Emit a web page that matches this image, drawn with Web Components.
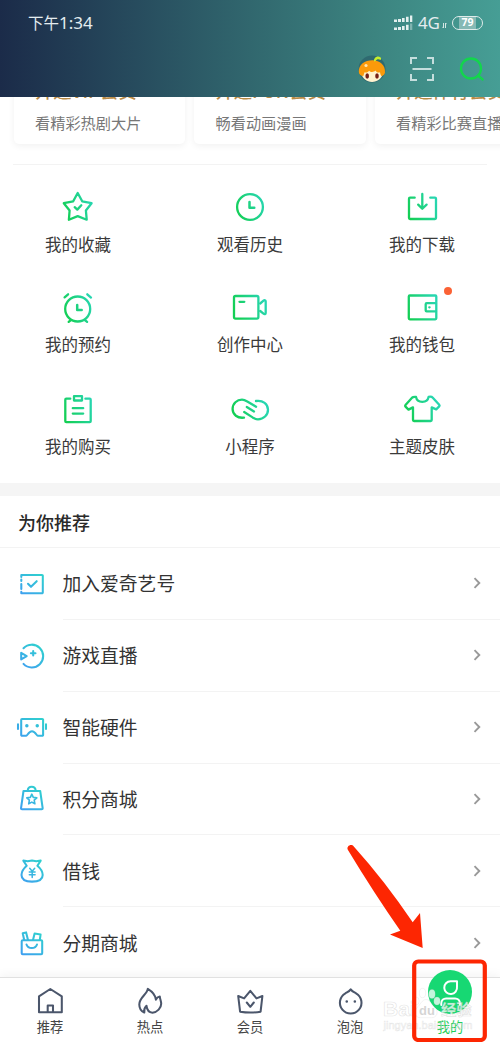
<!DOCTYPE html>
<html lang="zh-CN">
<head>
<meta charset="utf-8">
<title>我的</title>
<style>
html,body{margin:0;padding:0}
body{width:500px;height:1042px;overflow:hidden;background:#fff;color:#333;font-family:"Noto Sans CJK SC",sans-serif}
</style>
</head>
<body>
<my-page></my-page>
<script>
const define = (name, html, setup) => {
  const tpl = document.createElement('template');
  tpl.innerHTML = html;
  customElements.define(name, class extends HTMLElement {
    constructor() {
      super();
      this.attachShadow({mode: 'open'}).append(tpl.content.cloneNode(true));
    }
    connectedCallback() { if (setup) setup(this, this.shadowRoot); }
  });
};

const ICONS = {
  star: '<path d="M19.7 6 24.2 14.3 33.6 16.2 27.9 23.5 28.7 32.7 19.7 29.1 10.9 32.7 11.6 23.5 5.8 16.2 15.2 14.3Z"/><path d="m16.7 20.2 2.6 2.4 4-4.3"/>',
  clock: '<circle cx="20" cy="20" r="12.9"/><path d="M19.5 15v5.7h4.8" stroke-width="2.5"/>',
  download: '<path d="M12.7 10.7H8a1 1 0 0 0-1 1V31a1 1 0 0 0 1 1h25a1 1 0 0 0 1-1V11.7a1 1 0 0 0-1-1h-4.7M20.3 7v14.5M16.2 17.6l4.1 4.2 4.3-4.2"/>',
  alarm: '<circle cx="19.7" cy="22" r="12.5"/><path d="m6.6 10.4 3.5-3.1M29.3 7.3l3.7 3.3M13 33l-2.3 1.9M26.8 33l2.3 1.9"/><path d="M19.2 18v5h4.5" stroke-width="2.5"/>',
  camera: '<rect x="4" y="9" width="24.4" height="22.6" rx="1.5"/><path d="M9.5 14.8h4.8"/><path d="M30.200 16.500 33.500 13.700c1-.8 2.200-.5 2.200.7v11.600c0 1.200-1.200 1.500-2.200.7L30.200 24"/>',
  wallet: '<rect x="6.8" y="8.5" width="27.5" height="23.8" rx="1"/><path d="M34 16.2H24.7a1 1 0 0 0-1 1v6.2a1 1 0 0 0 1 1H34M27.3 20.3h.3"/>',
  clip: '<path d="M12.3 9.7h-4a1 1 0 0 0-1 1v21.5a1 1 0 0 0 1 1h23.4a1 1 0 0 0 1-1V10.7a1 1 0 0 0-1-1h-4.3M14.8 19.2h10.4M14.8 24.6h10.4"/><rect x="16" y="7.2" width="8" height="4.3"/>',
  mini: '<path d="M14 28.6C7.5 29.5 2.6 25.6 2.6 20S7 10.7 12 10.7c2 0 3.6.8 5.3 1.8l8.8 5.2M26 12c7-1 12 3 12 8.7 0 5.4-4.5 9.6-10 9.6-2 0-3.6-.8-5.4-1.9l-8.4-5.4M16.8 18l7.2 4.5"/>',
  shirt: '<path d="M14 7.9c.5 3 3 5 6.3 5s5.800-2 6.300-5c2-.4 3.300-.2 4.200.8l6.400 7c.5.600.5 1.200 0 1.700l-3 3-4.500-2v12.600a1 1 0 0 1-1 1H12a1 1 0 0 1-1-1V18.400l-4.500 2.200-3-3c-.5-.5-.5-1.100 0-1.700l6.300-7c1-1 2.300-1.200 4.200-1Z"/>',
  join: '<path d="M7.300 11V8.900H28a.8.800 0 0 1 .8.800v16.700a.8.800 0 0 1-.8.800H7.300v-1.500M7.300 13.500V15M7.300 18v5M14 17.800l3 3 5.700-5.600"/>',
  game: '<path d="M9.500 10.200a11.400 11.400 0 1 1 0 15.700M7.200 14.800v6.600l5.500-3.300ZM19.200 12.900v4.500M16.900 15.200h4.600"/>',
  vr: '<path d="M8 9h20.300a.8.800 0 0 1 .8.800V25a.8.800 0 0 1-.8.800h-4.600c-1 0-2.400-4.600-5.700-4.600s-4.700 4.600-5.700 4.600H8a.8.800 0 0 1-.8-.8V9.800A.8.800 0 0 1 8 9ZM4 14.300v4.600M32 14.300v4.600"/><path d="M12.800 15.700h.1M23.200 15.700h.1" stroke-width="3.400"/>',
  bag: '<path d="M9.500 10h16.700l2.500 17.300a1 1 0 0 1-1 1H8a1 1 0 0 1-1-1ZM13.700 9.700c.3-5.200 7.700-5.200 8 0"/><path d="m17.800 13.200 1.500 3.200 3.500.4-2.600 2.400.7 3.600-3.100-1.700-3.100 1.700.7-3.600-2.600-2.400 3.500-.4Z" stroke-width="1.600"/>',
  money: '<path d="M12.700 12.700 9.300 7.600l4.400.7 4.300-.7 4.300.7 4.400-.7-3.300 5.100c3.300 2.800 5.300 6 5.300 9.300 0 4.500-4 6.600-10.700 6.600S7.500 26.500 7.500 22c0-3.300 2-6.500 5.200-9.300Z"/><path d="m15.700 15.300 2.500 3 2.500-3M18.200 18.300v6.200M15.300 19h5.800M15.300 21.800h5.800" stroke-width="1.500"/>',
  gift: '<rect x="7.700" y="15.300" width="20.500" height="14" rx="1"/><path d="M12.500 19.500c1.500 4.700 9 4.700 10.500 0M10.200 15 8.700 8.300l3.400-.9L14 15M19 15l1.600-6.500 6 .9-.8 5.600"/>',
  home: '<path d="M16.300 4 27.800 11.300v16H5v-16ZM13.700 27v-6.500H19V27"/>',
  fire: '<path d="M13.800 3.900C13 9.500 5.300 12.500 5.300 19.400c0 3.800 1.700 6.600 5 8.100-.6-3.200.1-4.700 2.200-6.700.4 3.400 2.500 6.600 6 6.900 4.800-.6 8.700-4.700 8.700-9 0-2.700-1.200-4.300-1.400-7.200-1.800.3-3.200 1.500-3.900 3.200-.4-4.600-3.500-8-8.100-10.800Z"/>',
  crown: '<path d="m4.200 11 5.900 2.400 6.200-7.600 6.200 7.600 5.900-2.400-1.800 15.700c-6.600 1.100-13.700 1.100-20.500 0ZM12.800 17.500l3.500 4.300 3.500-4.300"/>',
  bubble: '<path d="M16.700 4.300c1.500 2.200 3.200 2.800 5.300 4a10.800 10.800 0 1 1-10.600 0c2.100-1.200 3.800-1.800 5.300-4Z"/><path d="M12.700 16.400h.1M20.800 16.400h.1" stroke-width="2.500"/>'
};
const TONES = {
  green: ['#14cf55', '#27d6b0', 40, 2.3],
  blue: ['#3f9cf2', '#2fd0cf', 36, 2.050],
  slate: ['#4b566b', '#4b566b', 32, 2.050]
};

define('line-icon', '<style>:host{display:block;flex:none}svg{display:block}</style><div></div>', (el, root) => {
  const [a, b, size, w] = TONES[el.getAttribute('tone')];
  const blue = size === 36;
  root.querySelector('div').innerHTML = `<svg width="${size}" height="${size}" viewBox="0 0 ${size} ${size}" fill="none" stroke="url(#g)" stroke-width="${w}" stroke-linecap="round" stroke-linejoin="round"><defs><linearGradient id="g" gradientUnits="userSpaceOnUse" x1="6" y1="${blue ? 30 : 26}" x2="${blue ? 24 : 34}" y2="${blue ? 6 : 14}"><stop stop-color="${a}"/><stop offset="1" stop-color="${b}"/></linearGradient></defs>${ICONS[el.getAttribute('name')]}</svg>`;
});

define('status-bar', `<style>
:host{display:flex;align-items:center;height:45px;padding:0 17px 0 28px;color:#e4ecef;font-size:15.500px}
.time{flex:1}.time span{font-family:"Noto Sans",sans-serif;font-size:17px}
.net{font:17px/20px "Noto Sans",sans-serif;margin:0 2px 0 5px}
.bat{display:block;box-sizing:border-box;width:31px;height:14px;margin-left:5px;border:1.500px solid #dfeceb;border-radius:7px;background:linear-gradient(90deg,transparent 6px,#86b9b5 6px,#86b9b5 23px,transparent 23px);font:bold 10.500px/11px "Noto Sans",sans-serif;text-align:center;color:#fff}
svg{display:block}
</style>
<div class="time">下午<span>1:34</span></div>
<svg width="20" height="16" viewBox="0 0 20 16" fill="#e4f0ef"><path d="M1 4.600h3V7H1zM5 4h3v3H5zM9 3h2.600v4H9zM13 1.800h2.600V7H13zM17 .5h2.300V7H17zM1 12.600h3V15H1zM5 12h3v3H5zM9 11h2.600v4H9zM13 9.800h2.600V15H13z"/><path d="M17 8.500h2.300V15H17z" opacity=".4"/></svg>
<span class="net">4G</span>
<svg width="5" height="7" viewBox="0 0 5 7" fill="none" stroke="#d4e6e4" style="margin-top:5px"><path d="M1.500 1v5L.3 4.800M3.500 6V1l1.200 1.200"/></svg>
<span class="bat">79</span>`);

define('app-header', `<style>
:host{display:flex;flex-direction:column;flex:none;height:97px;position:relative;z-index:1;background:linear-gradient(90deg,#1b2b49,#26495c 25%,#31676e 50%,#3c8480 75%,#469e95)}
.tools{display:flex;align-items:center;justify-content:flex-end;gap:18px;height:48px;padding-right:10.500px}
svg{display:block}
</style>
<status-bar></status-bar>
<div class="tools">
<svg width="32" height="32" viewBox="0 0 32 32"><circle cx="16" cy="16" r="13.500" fill="#2f6a70"/><path d="M5 20c1.500 5.500 5.500 9 11 9s10-3.500 11-9l-3-4H8Z" fill="#fff3cf"/><path d="M2.800 19C2.500 11.500 9 7.200 16.500 7.300 24 7.500 29.600 12.500 29 19.500c-.4 2.400-2 3.500-3.700 3.400-.8-1.200-1-2.400-1.300-3.700-1.800 1-3.700 0-4.700-1.700-1.300 1.900-4.700 1.900-6.200.2-1 1.500-3 2.300-4.500 1.500l-1.300 3.700c-2.300 0-4.300-1.400-4.500-3.900Z" fill="#fb9a0a"/><path d="M18 8.500c-.5-3.500 3-6.300 6.300-4.300 1 .7 1 1.800.2 2.700-1.700-1-3.700-1.200-4.900 1.200Z" fill="#c7ee2b"/><ellipse cx="11.200" cy="23" rx="1.800" ry="2.800" fill="#762018"/><ellipse cx="21" cy="23" rx="1.800" ry="2.800" fill="#762018"/><circle cx="10" cy="12.500" r="1.600" fill="#ffe5ae"/></svg>
<svg width="32" height="32" viewBox="0 0 32 32" fill="none" stroke="#c5dedd" stroke-width="2"><path d="M5 11V5h6M21 5h6v6M27 21v6h-6M11 27H5v-6M6.500 16h19"/></svg>
<svg width="34" height="32" viewBox="0 0 34 32" fill="none" stroke="#12d64c" stroke-width="2.300" stroke-linecap="round"><circle cx="15" cy="15.500" r="10"/><path d="m22 22.500 4.700 4"/></svg>
</div>`);

define('promo-card', `<style>
:host{display:block;flex:none;box-sizing:border-box;width:171.500px;height:84px;padding:16px 0 0 21.500px;border-radius:5px;background:#fff;box-shadow:0 2px 7px rgba(0,0,0,.06);white-space:nowrap}
.t{font-size:18.300px;line-height:28px;color:#b98a45;font-weight:500}
.s{margin-top:6px;font-size:15.200px;line-height:24px;color:#777}
</style><div class="t"><slot name="title"></slot></div><div class="s"><slot></slot></div>`);

define('grid-item', `<style>
:host{display:flex;flex-direction:column;align-items:center;width:100px;position:relative}
.l{margin-top:5px;font-size:16.500px;line-height:24px;color:#3a3a3a;white-space:nowrap}
:host([badge])::after{content:"";position:absolute;width:8px;height:8px;border-radius:50%;background:#fb6235;left:71.500px;top:0}
</style><line-icon tone="green"></line-icon><div class="l"><slot></slot></div>`, (el, root) => {
  const i = document.createElement('line-icon');
  i.setAttribute('tone', 'green'); i.setAttribute('name', el.getAttribute('icon'));
  root.querySelector('line-icon').replaceWith(i);
});

define('list-row', `<style>
:host{display:flex;flex:none;height:71.850px;padding-left:14px}
.i{display:flex;align-items:center;width:48.500px}
.b{flex:1;display:flex;align-items:center;justify-content:space-between;border-bottom:1px solid #f3f3f3;padding-right:19px;box-sizing:border-box;font-size:18.800px;line-height:28px;color:#333}
:host(:last-child) .b{border-color:transparent}
svg{display:block}
</style><div class="i"></div><div class="b"><span><slot></slot></span><svg width="8" height="12" viewBox="0 0 8 12" fill="none" stroke="#999" stroke-width="1.900"><path d="m1.500 1.200 4.800 4.800-4.800 4.800"/></svg></div>`, (el, root) => {
  root.querySelector('.i').innerHTML = `<line-icon tone="blue" name="${el.getAttribute('icon')}"></line-icon>`;
});

define('tab-item', `<style>
:host{display:flex;flex-direction:column;align-items:center;flex:1;padding-top:7px;font-size:13.300px;line-height:20px;color:#444}
:host([active]){color:#1fcf5c;padding-top:0}
.orb{display:block;margin-top:-8px;margin-bottom:3px}
</style><div class="i"></div><div class="l"><slot></slot></div>`, (el, root) => {
  root.querySelector('.i').innerHTML = el.hasAttribute('active')
    ? '<svg class="orb" width="44" height="44" viewBox="0 0 44 44" fill="none" stroke="#fff" stroke-width="2" stroke-linejoin="round" stroke-linecap="round"><circle cx="22" cy="22" r="22" fill="#17d873" stroke="none"/><path d="M29 11.200v5.500a6.400 6.400 0 1 1-6.400-5.500ZM13.300 35v-1.800a4.800 4.800 0 0 1 4.800-4.800h9a4.800 4.800 0 0 1 4.800 4.800V35"/></svg>'
    : `<line-icon tone="slate" name="${el.getAttribute('icon')}"></line-icon>`;
});

define('tab-bar', `<style>
:host{display:flex;flex:none;height:64px;position:relative;border-top:1px solid #e1e1e1;background:#fff;box-shadow:0 -3px 9px rgba(0,0,0,.045)}
</style><slot></slot>`);

define('water-mark', `<style>
:host{position:absolute;left:380px;top:984px;display:block}
svg{display:block}
</style>
<svg width="98" height="52" viewBox="0 0 98 52" fill="#fff" fill-opacity=".75" stroke="#bbb" stroke-opacity=".4" stroke-width=".7" font-family="Liberation Sans,sans-serif" font-weight="bold">
<text x="3" y="32" font-size="21">Bai</text>
<g stroke-opacity=".25"><ellipse cx="42.500" cy="9" rx="3.200" ry="4.700"/><ellipse cx="52" cy="10" rx="3.200" ry="4.600"/><ellipse cx="36" cy="17" rx="3.200" ry="4"/><ellipse cx="57" cy="17" rx="3.200" ry="4"/>
<path d="M46 15.500c4 0 5.500 5.200 9 8.200 4 4 2 10-3.500 10h-11c-5.500 0-7.500-6-3.500-10 3.500-3 5-8.200 9-8.200Z"/></g>
<text x="39" y="30.500" font-size="13" fill="#aaa" fill-opacity=".5" stroke="none">du</text>
<text x="61" y="30.500" font-size="15.300" font-family="Noto Sans CJK SC,sans-serif">经验</text>
<text x="3.500" y="44.500" font-size="11" font-weight="normal" textLength="89" fill-opacity=".4" stroke-width=".6" stroke-opacity=".35">jingyan.baidu.com</text>
</svg>`);

define('pointer-mark', `<style>
:host{position:absolute;left:340px;top:840px;display:block}
svg{display:block}
</style>
<svg width="150" height="202" viewBox="340 840 150 202"><path d="M347.800 849.700c-1.800-3.400 3.400-6.600 6-3.300Q385 881 412.700 922.300L420 913l2.700 35-32.700-13.500 10.300-3.800Q374 893 347.800 849.700Z" fill="#fd2602"/><rect x="414.200" y="961.500" width="70.600" height="78.500" rx="4" fill="none" stroke="#fd2602" stroke-width="4.200"/></svg>`);

define('my-page', `<style>
:host{display:flex;flex-direction:column;width:500px;height:1042px;overflow:hidden;position:relative;background:#fff}
main{flex:1;min-height:0;display:flex;flex-direction:column;overflow:hidden}
.cards{display:flex;gap:9px;margin:-37px 0 0;padding:0 0 20px 13.500px;flex:none}
.line{height:1px;flex:none;margin:0 13px 22px;background:#f3f3f3}
.grid{display:grid;flex:none;grid-template-columns:repeat(3,100px);grid-template-rows:100px 102px 94px;justify-content:space-between;padding:0 28px}
.band{height:13px;flex:none;background:#f5f5f5}
h2{margin:0;flex:none;height:52px;line-height:52px;padding-left:18px;border-bottom:1px solid #f3f3f3;box-sizing:border-box;font-size:18px;font-weight:500;color:#2a2a2a}
.list{display:flex;flex-direction:column}
</style>
<app-header></app-header>
<main>
<div class="cards"><promo-card><span slot="title">开通VIP会员</span>看精彩热剧大片</promo-card><promo-card><span slot="title">开通FUN会员</span>畅看动画漫画</promo-card><promo-card><span slot="title">开通体育会员</span>看精彩比赛直播</promo-card></div>
<div class="line"></div>
<div class="grid">
<grid-item icon="star">我的收藏</grid-item><grid-item icon="clock">观看历史</grid-item><grid-item icon="download">我的下载</grid-item>
<grid-item icon="alarm">我的预约</grid-item><grid-item icon="camera">创作中心</grid-item><grid-item icon="wallet" badge>我的钱包</grid-item>
<grid-item icon="clip">我的购买</grid-item><grid-item icon="mini">小程序</grid-item><grid-item icon="shirt">主题皮肤</grid-item>
</div>
<div class="band"></div>
<h2>为你推荐</h2>
<div class="list">
<list-row icon="join">加入爱奇艺号</list-row><list-row icon="game">游戏直播</list-row><list-row icon="vr">智能硬件</list-row><list-row icon="bag">积分商城</list-row><list-row icon="money">借钱</list-row><list-row icon="gift">分期商城</list-row>
</div>
</main>
<tab-bar><tab-item icon="home">推荐</tab-item><tab-item icon="fire">热点</tab-item><tab-item icon="crown">会员</tab-item><tab-item icon="bubble">泡泡</tab-item><tab-item active>我的</tab-item></tab-bar>
<water-mark></water-mark>
<pointer-mark></pointer-mark>`);
</script>
</body>
</html>
